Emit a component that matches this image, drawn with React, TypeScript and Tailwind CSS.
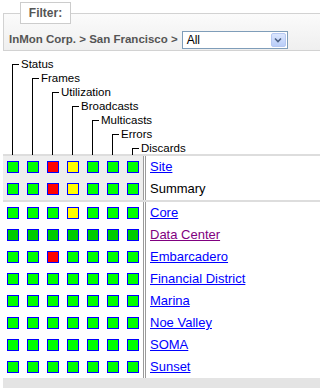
import React from "react";

type Cell = "g" | "d" | "r" | "y";

const metrics = [
  { name: "Status", cls: "ml-[12px] mt-0" },
  { name: "Frames", cls: "ml-[32px] mt-[14px]" },
  { name: "Utilization", cls: "ml-[52px] mt-[28px]" },
  { name: "Broadcasts", cls: "ml-[72px] mt-[42px]" },
  { name: "Multicasts", cls: "ml-[92px] mt-[56px]" },
  { name: "Errors", cls: "ml-[112px] mt-[70px]" },
  { name: "Discards", cls: "ml-[132px] mt-[84px]" },
];

const cellColor: Record<Cell, string> = {
  g: "bg-[#00ff00]",
  d: "bg-[#00cc00]",
  r: "bg-[#ff0000]",
  y: "bg-[#ffff00]",
};

const summaryRows: { label: string; cells: Cell[]; link: boolean }[] = [
  { label: "Site", cells: ["g", "g", "r", "y", "g", "g", "g"], link: true },
  { label: "Summary", cells: ["g", "g", "r", "y", "g", "g", "g"], link: false },
];

const siteRows: { label: string; cells: Cell[]; visited?: boolean }[] = [
  { label: "Core", cells: ["g", "g", "g", "y", "g", "g", "g"] },
  { label: "Data Center", cells: ["d", "d", "d", "d", "d", "d", "d"], visited: true },
  { label: "Embarcadero", cells: ["g", "g", "r", "g", "g", "g", "g"] },
  { label: "Financial District", cells: ["g", "g", "g", "g", "g", "g", "g"] },
  { label: "Marina", cells: ["g", "g", "g", "g", "g", "g", "g"] },
  { label: "Noe Valley", cells: ["g", "g", "g", "g", "g", "g", "g"] },
  { label: "SOMA", cells: ["g", "g", "g", "g", "g", "g", "g"] },
  { label: "Sunset", cells: ["g", "g", "g", "g", "g", "g", "g"] },
];

function Squares({ cells, shaded }: { cells: Cell[]; shaded?: boolean }) {
  return (
    <div
      className={`flex items-center gap-[8px] pl-[4px] w-[140px] h-[22px] ${
        shaded ? "bg-[#eeeeee]" : "bg-white"
      }`}
    >
      {cells.map((c, i) => (
        <span
          key={i}
          className={`block w-[12px] h-[12px] border border-[#0000ff] ${cellColor[c]}`}
        />
      ))}
    </div>
  );
}

function Row({
  cells,
  shaded,
  children,
}: {
  cells: Cell[];
  shaded?: boolean;
  children: React.ReactNode;
}) {
  return (
    <div className="flex h-[22px]">
      <Squares cells={cells} shaded={shaded} />
      <div className="w-[3px] border-x border-[#9a9a9a] bg-white" />
      <div className="flex items-center pl-[4px] text-[13px]">{children}</div>
    </div>
  );
}

export default function App() {
  return (
    <div className="w-[320px] h-[388px] overflow-hidden bg-white font-[Liberation_Sans,Arial,sans-serif]">
      {/* filter box */}
      <fieldset className="mt-[2px] ml-[3px] w-[340px] h-[49px] border border-[#d2d2d2] bg-gradient-to-b from-[#fbfbfb] to-[#efefef] pl-[5px] pt-[6px] text-left">
        <legend className="ml-[11px] p-0 text-left">
          <span className="flex items-center justify-center w-[51px] h-[22px] border border-[#cccccc] bg-white text-[12px] font-bold text-[#555555]">
            Filter:
          </span>
        </legend>
        <div className="flex items-center gap-[4px] h-[20px]">
          <span className="text-[11.5px] font-bold text-[#555555] whitespace-nowrap">
            InMon Corp. &gt; San Francisco &gt;
          </span>
          <div className="flex items-center justify-between w-[106px] h-[18px] border border-[#7f9db9] bg-white">
            <span className="pl-[4px] text-[12px] text-black">All</span>
            <span className="flex items-center justify-center w-[15px] h-[14px] mr-[1px] rounded-[2px] border border-[#b6c8f2] bg-gradient-to-b from-[#dbe6fe] to-[#b9cdf8]">
              <svg width="8" height="6" viewBox="0 0 8 6">
                <path d="M1 1.5 L4 4.5 L7 1.5" fill="none" stroke="#4d6185" strokeWidth="1.6" />
              </svg>
            </span>
          </div>
        </div>
      </fieldset>

      {/* column headings */}
      <div className="grid h-[90px] mt-[13px] text-[11.5px] text-black">
        {metrics.map((m) => (
          <div
            key={m.name}
            className={`[grid-area:1/1] w-[7px] border-l border-t border-black ${m.cls}`}
          >
            <span className="block -mt-[8px] ml-[8px] leading-[14px] whitespace-nowrap">
              {m.name}
            </span>
          </div>
        ))}
      </div>

      {/* status grid */}
      <div className="ml-[3px]">
        <div className="border-t-2 border-[#dddddd]">
          {summaryRows.map((r) => (
            <Row key={r.label} cells={r.cells} shaded>
              {r.link ? (
                <a href="#" className="text-[#0000ff] underline">
                  {r.label}
                </a>
              ) : (
                <span className="text-black">{r.label}</span>
              )}
            </Row>
          ))}
        </div>
        <div className="border-t-2 border-[#dddddd]">
          {siteRows.map((r) => (
            <Row key={r.label} cells={r.cells}>
              <a
                href="#"
                className={`underline whitespace-nowrap ${
                  r.visited ? "text-[#800080]" : "text-[#0000ff]"
                }`}
              >
                {r.label}
              </a>
            </Row>
          ))}
        </div>
        <div className="h-[12px] bg-[#e4e4e4]" />
      </div>
    </div>
  );
}
